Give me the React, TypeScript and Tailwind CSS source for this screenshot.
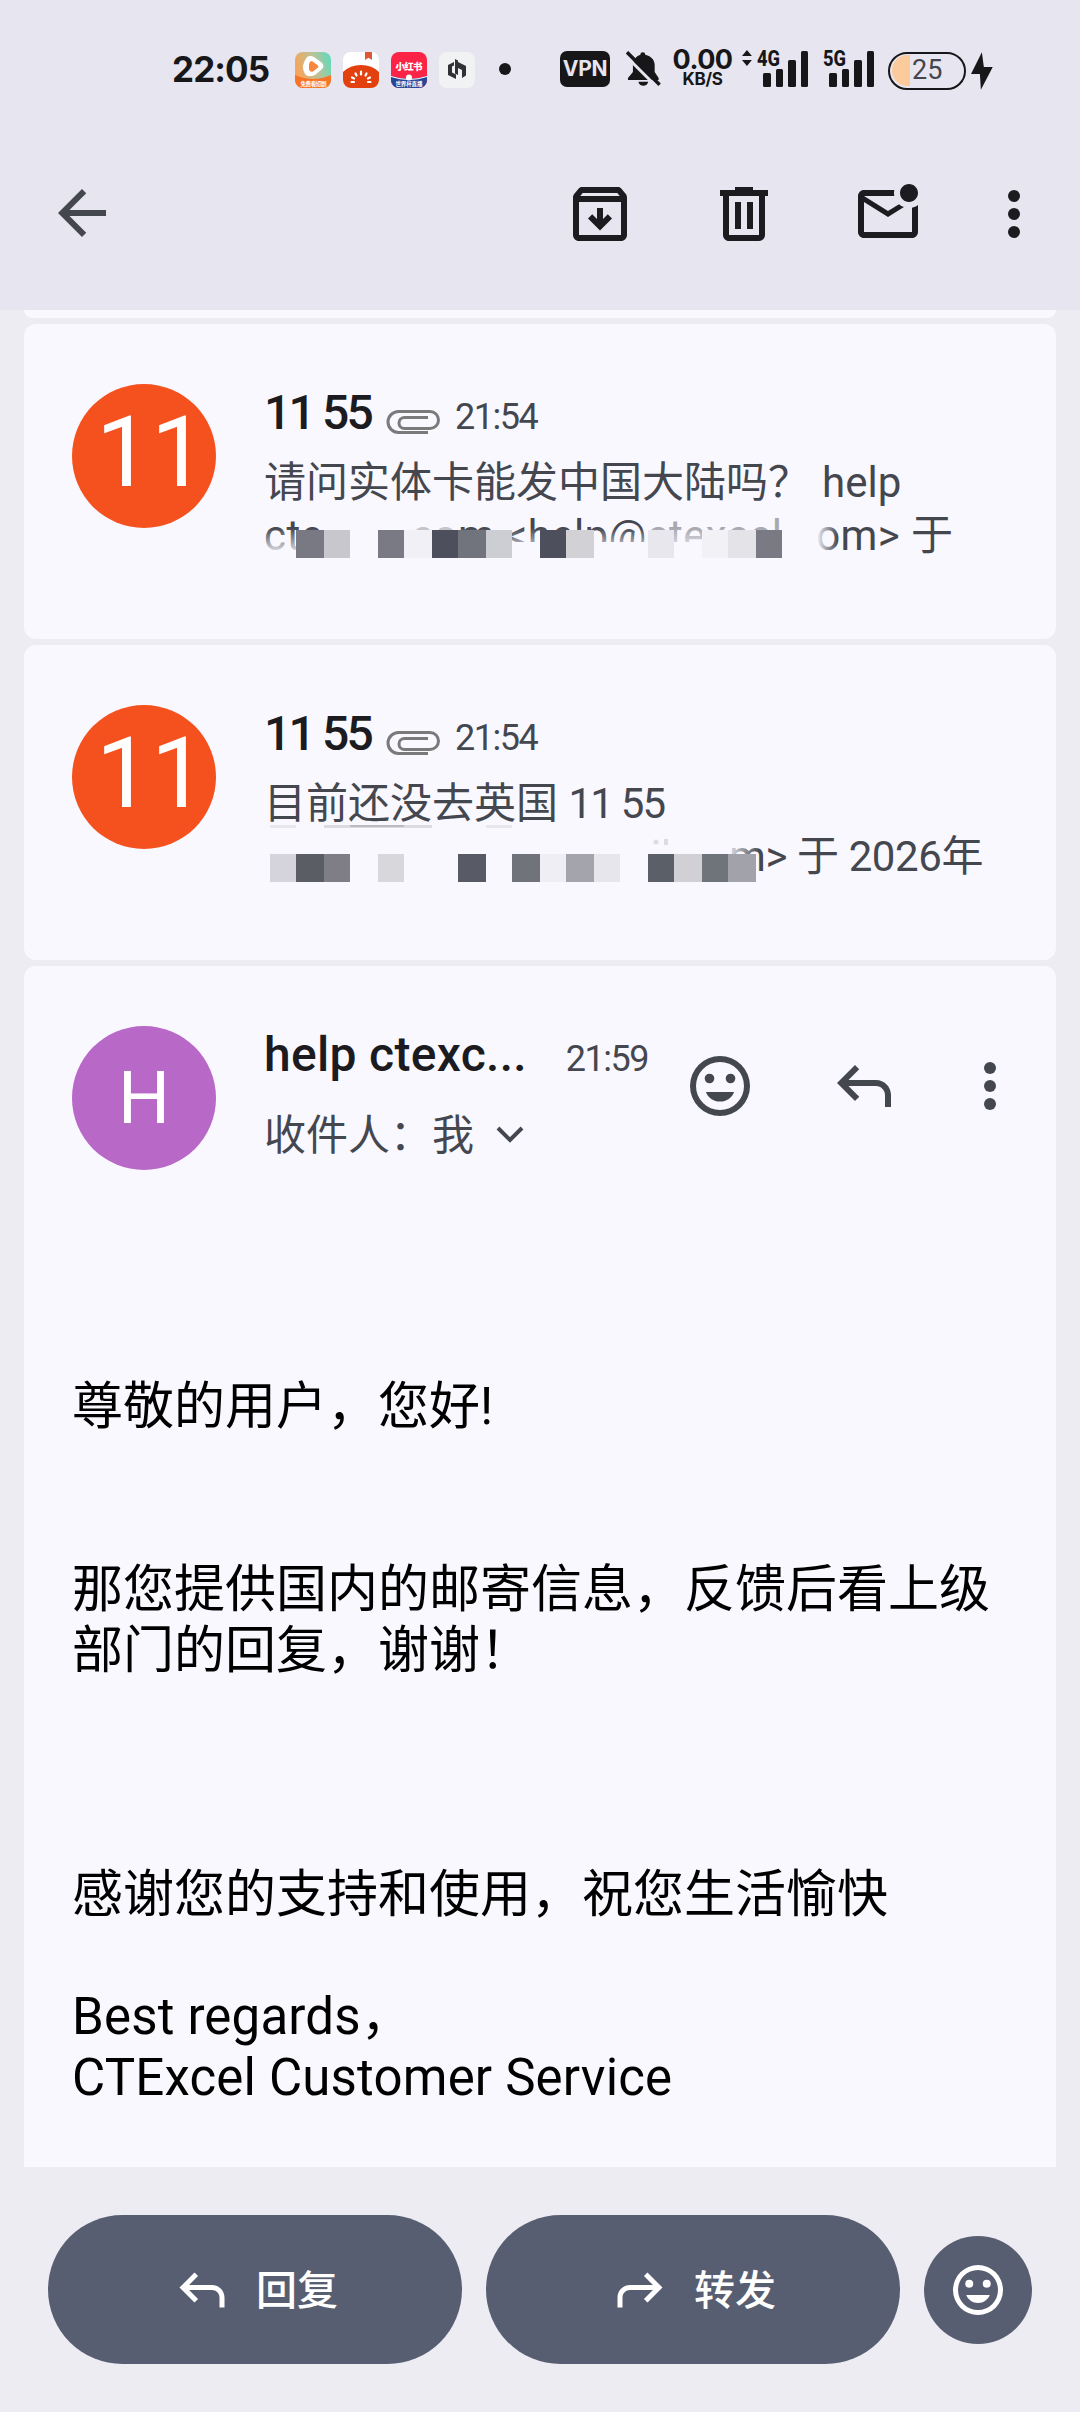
import React from 'react';

const Icon = ({ size = 72, children }: { size?: number; children: React.ReactNode }) => (
  <svg width={size} height={size} viewBox="0 0 24 24" fill="currentColor" className="shrink-0">
    {children}
  </svg>
);

const MoreIcon = () => (
  <Icon>
    <circle cx="12" cy="6" r="2" />
    <circle cx="12" cy="12" r="2" />
    <circle cx="12" cy="18" r="2" />
  </Icon>
);

const ReplyIcon = ({ size = 72 }: { size?: number }) => (
  <Icon size={size}>
    <path d="M19 19v-4c0-1.66-1.34-3-3-3H6.83l3.59 3.59L9 17l-6-6 6-6 1.41 1.41L6.83 10H16c2.76 0 5 2.24 5 5v4h-2z" />
  </Icon>
);

const SmileIcon = ({ size = 72 }: { size?: number }) => (
  <Icon size={size}>
    <path d="M12 2a10 10 0 1 0 0 20 10 10 0 0 0 0-20zm0 18a8 8 0 1 1 0-16 8 8 0 0 1 0 16z" />
    <circle cx="8.5" cy="9.5" r="1.6" />
    <circle cx="15.5" cy="9.5" r="1.6" />
    <path d="M7.3 14c.7 1.9 2.5 3.2 4.7 3.2s4-1.3 4.7-3.2z" />
  </Icon>
);

const ClipIcon = () => (
  <svg width="54" height="24" viewBox="0 0 54 24" fill="none" stroke="#7a7a7a" strokeWidth="3" className="shrink-0">
    <path d="M42 22.5H12.5a10.5 10.5 0 0 1 0-21H44a8.5 8.5 0 0 1 0 17H18.5a5 5 0 0 1 0-11H42" />
  </svg>
);

const Signal = ({ label }: { label: string }) => (
  <svg width="52" height="38" viewBox="0 0 52 38" fill="#17171a" className="shrink-0 overflow-visible">
    <text x="0" y="16" fontFamily="Roboto, sans-serif" fontWeight="800" fontSize="22" textLength="23" lengthAdjust="spacingAndGlyphs">{label}</text>
    <rect x="6" y="23" width="8" height="14" rx="1.5" />
    <rect x="19" y="19" width="7" height="18" rx="1.5" />
    <rect x="31" y="10" width="8" height="27" rx="1.5" />
    <rect x="44" y="1" width="7" height="36" rx="1.5" />
  </svg>
);

const StatusBar = () => (
  <div className="flex h-[138px] items-center pl-[172px] pr-[87px] text-[#17171a]">
    <span className="w-[97px] whitespace-nowrap font-['Inter'] text-[35px] font-bold leading-none tracking-[-0.9px]">22:05</span>
    <div className="ml-[26px] mt-0.5 flex gap-3">
      <svg width="36" height="36" viewBox="0 0 36 36">
        <defs>
          <linearGradient id="video" x1="0" y1="0.3" x2="1" y2="0">
            <stop offset="0" stopColor="#f6a55c" />
            <stop offset="0.55" stopColor="#b5c49a" />
            <stop offset="1" stopColor="#55dcc0" />
          </linearGradient>
          <clipPath id="tile"><rect width="36" height="36" rx="8" /></clipPath>
        </defs>
        <g clipPath="url(#tile)">
          <rect width="36" height="36" fill="url(#video)" />
          <path d="M0 23q18 8 36 0v13H0z" fill="#f97326" />
          <path d="M12 5q3-2 7 0l7 5q5 4 0 8l-6 5q-7 3-10-1-5-8 2-17z" fill="#fff" />
          <path d="M15 9.5q2-1 4 1l4 3q1 1 0 2l-5 4q-3 1-4-2v-5z" fill="#f6873c" />
          <text x="5.5" y="34" fontSize="5.5" fontWeight="700" fill="#fff" fontFamily="Noto Sans CJK SC, sans-serif" textLength="26">免费看短剧</text>
        </g>
      </svg>
      <svg width="36" height="36" viewBox="0 0 36 36">
        <g clipPath="url(#tile)">
          <rect width="36" height="36" fill="#fff" />
          <path d="M22 0h7v8l-3.5-2.2L22 8z" fill="#dc5733" />
          <path d="M0 20q7-7 18-7t18 7v16H0z" fill="#e2400f" />
          <g stroke="#fff" strokeWidth="2.2" strokeLinecap="round">
            <path d="M18 19.5v3M12.5 21.5l1 2M23.5 21.5l-1 2M9 25.5l2 1M27 25.5l-2 1M8.5 30H11M27.5 30H25" />
          </g>
        </g>
      </svg>
      <svg width="36" height="36" viewBox="0 0 36 36">
        <g clipPath="url(#tile)">
          <rect width="36" height="36" fill="#fb2446" />
          <path d="M0 24q18 6 36 0v12H0z" fill="#25479a" />
          <path d="M0 24.5q18 6 36 0" stroke="#fff" strokeWidth="1" fill="none" />
          <circle cx="18" cy="25.5" r="3" fill="#fff" />
          <text x="4.5" y="17.5" fontSize="9.5" fontWeight="900" fill="#fff" fontFamily="Noto Sans CJK SC, sans-serif" textLength="27">小红书</text>
          <text x="4.5" y="34" fontSize="5.5" fontWeight="700" fill="#fff" fontFamily="Noto Sans CJK SC, sans-serif" textLength="27">世界杯直播</text>
        </g>
      </svg>
      <svg width="36" height="36" viewBox="0 0 36 36">
        <rect width="36" height="36" rx="8" fill="#f1f2f3" />
        <path d="M17 27v-4.500l-4-2v-6l2-1V10l-6 3v10z" fill="#2f3135" />
        <path d="M16 7v14.500l3 1.500v-7l4 2v8l4-2.500V14l-8-4V8.500z" fill="#2f3135" />
      </svg>
    </div>
    <span className="ml-6 size-3 rounded-full bg-[#17171a]" />
    <span className="ml-[49px] flex h-9 w-[51px] items-center justify-center rounded-[7px] bg-[#17171a] font-['Inter'] text-[21px] font-bold tracking-[-0.3px] text-[#e7e5ef]">VPN</span>
    <svg width="36" height="36" viewBox="0 0 36 36" className="ml-4">
      <path d="M2 29v-2l5-6v-7c0-5 3-9 7.500-10.500a2.500 2.500 0 0 1 5 0C26 5 29 9 29 14v7l4 6v2z" fill="#17171a" />
      <path d="M12.500 31h10q-1 4-5 4t-5-4z" fill="#17171a" />
      <path d="M-1 4l34 34" stroke="#e7e5ef" strokeWidth="3" />
      <path d="M1 1l33 33" stroke="#17171a" strokeWidth="3.500" />
    </svg>
    <div className="ml-[10px] flex w-[62px] flex-col items-center whitespace-nowrap font-['Inter'] font-bold">
      <span className="text-[27px] leading-[21px] tracking-[-0.5px]">0.00</span>
      <span className="text-[17px] leading-[19px] tracking-[-0.3px]">KB/S</span>
    </div>
    <svg width="10" height="16" viewBox="0 0 10 16" fill="#17171a" className="mb-[22px] ml-[9px]">
      <path d="M5 0l5 6H0zM5 16l5-6H0z" />
    </svg>
    <div className="ml-[5px] flex gap-[14px]">
      <Signal label="4G" />
      <Signal label="5G" />
    </div>
    <div className="relative ml-[13px] mt-[3px] flex h-[38px] w-[79px] items-center justify-center overflow-hidden rounded-full border-2 border-[#17171a]">
      <span className="absolute left-0.5 top-[1.5px] h-[31px] w-[18px] rounded-l-full bg-[#fbcb9c]" />
      <span className="relative font-['Roboto'] text-[27px] leading-none text-[#45464c]">25</span>
    </div>
    <svg width="22" height="38" viewBox="0 0 22 38" className="ml-[5px] mt-[3px]">
      <path d="M11 0L0 22h9l1 16 12-23h-9z" fill="#17171a" />
    </svg>
  </div>
);

const Toolbar = () => (
  <div className="flex h-[152px] items-center pl-[46px] pr-[30px] text-[#1b1b20]">
    <span className="mb-0.5 text-[#45474f]">
      <Icon><path d="M20 11H7.830l5.590-5.590L12 4l-8 8 8 8 1.410-1.410L7.830 13H20v-2z" /></Icon>
    </span>
    <div className="ml-auto flex gap-[72px]">
      <Icon><path d="M20.540 5.230l-1.390-1.680C18.880 3.210 18.470 3 18 3H6c-.47 0-.88.21-1.160.55L3.460 5.230C3.170 5.570 3 6.020 3 6.500V19c0 1.100.9 2 2 2h14c1.100 0 2-.9 2-2V6.500c0-.48-.17-.93-.46-1.270zM6.240 5h11.520l.83 1H5.420l.82-1zM5 19V8h14v11H5zm8-9h-2v3.700l-1.600-1.600L8 13.500l4 4 4-4-1.400-1.400-1.600 1.600z" /></Icon>
      <Icon><path d="M15 4V3H9v1H4v2h1v13c0 1.100.9 2 2 2h10c1.100 0 2-.9 2-2V6h1V4h-5zm2 15H7V6h10v13zM9 8h2v9H9zm4 0h2v9h-2z" /></Icon>
      <Icon><path d="M22 8.980V18c0 1.100-.9 2-2 2H4c-1.100 0-2-.9-2-2V6c0-1.100.9-2 2-2h10.100C14.040 4.320 14 4.660 14 5s.04.68.1 1H4l8 5 3.670-2.290c.47.43 1.020.76 1.630.98L12 13 4 8v10h16V9.900c.74-.15 1.420-.48 2-.92zM16 5c0 1.660 1.340 3 3 3s3-1.340 3-3-1.340-3-3-3-3 1.340-3 3z" /></Icon>
    </div>
    <span className="ml-[54px]"><MoreIcon /></span>
  </div>
);

type Block = [x: number, w: number, color: string];

const firstBlocks: Block[] = [
  [32, 28, '#787982'], [60, 26, '#c8c7ce'], [114, 26, '#797a83'], [140, 28, '#f1f0f7'],
  [168, 26, '#4d505c'], [194, 28, '#71747c'], [222, 26, '#cdced3'], [276, 26, '#4d505c'],
  [302, 28, '#d2d1d6'], [384, 26, '#e8e7ed'], [438, 26, '#f2f1f6'], [464, 28, '#e4e3e8'],
  [492, 26, '#797a83'],
];

const secondBlocks: Block[] = [
  [6, 26, '#d5d3db'], [32, 28, '#5b5d65'], [60, 26, '#7f7e87'], [114, 26, '#d8d7dc'],
  [194, 28, '#585a65'], [248, 28, '#70747a'], [276, 26, '#efeef4'], [302, 28, '#a4a4ad'],
  [330, 26, '#e7e6eb'], [384, 26, '#5b5f68'], [410, 28, '#d0d0d5'], [438, 26, '#6f747a'],
  [464, 28, '#a2a2aa'],
];

const Mosaic = ({ blocks, className }: { blocks: Block[]; className: string }) => (
  <svg width="560" height="28" className={className}>
    {blocks.map(([x, w, color]) => (
      <rect key={x} x={x} width={w} height="28" fill={color} />
    ))}
  </svg>
);

const Message = ({ children }: { children: React.ReactNode }) => (
  <div className="flex h-[315px] rounded-xl bg-[#f9f8ff] px-12 pt-[60px]">
    <div className="flex size-36 shrink-0 items-center justify-center rounded-full bg-[#f5511e] pb-1.5 pl-3.5 font-['Roboto'] text-[98px] leading-none text-white">
      <span>11</span>
    </div>
    <div className="ml-12 min-w-0 flex-1">
      <div className="flex h-[60px] items-center whitespace-nowrap font-['Roboto']">
        <span className="mb-0.5 w-[105px] text-[48px] font-medium tracking-[-2.8px] text-[#1b1b20]">11 55</span>
        <span className="ml-[17px] mt-[16px]"><ClipIcon /></span>
        <span className="ml-[15px] mt-1.5 text-[36px] tracking-[-1.5px] text-[#45474f]">21:54</span>
      </div>
      <div className="relative mt-3 whitespace-nowrap font-['Roboto','Noto_Sans_CJK_SC',sans-serif] text-[42px] leading-[53px] text-[#45474f]">
        {children}
      </div>
    </div>
  </div>
);

const App = () => {
  return (
    <div className="flex h-[2412px] w-[1080px] flex-col overflow-hidden bg-[#edecf2]">
      <header className="h-[310px] shrink-0 bg-[#e7e5ef]">
        <StatusBar />
        <Toolbar />
      </header>

      <main className="flex flex-col gap-1.5 px-6">
        <div className="h-2 rounded-b-xl bg-[#f9f8ff]" />

        <Message>
          <p>请问实体卡能发中国大陆吗？<span className="ml-3">help</span></p>
          <p className="tracking-[0.4px]">ctexcel.com &lt;help@ctexcel.com&gt; 于</p>
          {/* redaction smear over the address */}
          <div className="absolute left-0 top-[72px] h-7 w-[545px] bg-gradient-to-b from-[#f9f8ff]/0 to-[#f9f8ff]" />
          <div className="absolute left-[60px] top-[56px] h-12 w-[84px] bg-[#f9f8ff]" />
          <div className="absolute left-[140px] top-[56px] h-12 w-[50px] bg-[#f9f8ff]/70" />
          <div className="absolute left-[385px] top-[56px] h-12 w-[140px] bg-[#f9f8ff]/55" />
          <div className="absolute left-[518px] top-[56px] h-12 w-[56px] bg-gradient-to-r from-[#f9f8ff] via-[#f9f8ff] via-60% to-[#f9f8ff]/0" />
          <div className="absolute left-60 top-[86px] h-8 w-[290px] bg-[#f9f8ff]" />
          <Mosaic blocks={firstBlocks} className="absolute left-0 top-[74px]" />
        </Message>

        <Message>
          <p>目前还没去英国 <span className="tracking-[-1.8px]">11 55</span></p>
          <p className="pl-[465px] tracking-[-0.4px]">m&gt; 于 2026年</p>
          <div className="absolute left-[460px] top-[56px] h-[46px] w-9 bg-gradient-to-r from-[#f9f8ff] to-[#f9f8ff]/0" />
          <Mosaic blocks={secondBlocks} className="absolute left-0 top-[77px]" />
          <svg width="500" height="24" className="absolute left-0 top-[48px]">
            <rect x="6" width="26" height="3" fill="#e8e7ec" />
            <rect x="60" width="108" height="3" fill="#dcdbe1" />
            <rect x="86" y="-1" width="54" height="3" fill="#bcbbc2" />
            <rect x="222" width="26" height="3" fill="#e8e7ec" />
            <circle cx="392" cy="17" r="2.5" fill="#dddce2" />
            <rect x="400" y="14" width="4" height="6" fill="#dddce2" />
          </svg>
        </Message>

        <article className="h-[1201px] rounded-t-xl bg-[#f9f8ff] px-12 pt-[60px]">
          <div className="flex h-36 text-[#45474f]">
            <div className="flex size-36 shrink-0 items-center justify-center rounded-full bg-[#b868c7] font-['Roboto'] text-[73px] leading-none text-white">H</div>
            <div className="ml-12 w-[384px] whitespace-nowrap">
              <div className="flex h-[60px] items-center font-['Roboto']">
                <span className="mb-0.5 w-[302px] text-[48px] font-medium tracking-[0.3px] text-[#1b1b20]">help ctexc...</span>
                <span className="mt-1.5 text-[36px] tracking-[-1.5px]">21:59</span>
              </div>
              <div className="flex h-[98px] items-center font-['Roboto','Noto_Sans_CJK_SC',sans-serif] text-[42px]">
                <span>收件人：我</span>
                <svg width="28" height="18" viewBox="0 0 28 18" fill="none" stroke="currentColor" strokeWidth="4" className="ml-[22px]">
                  <path d="M2 2l12 12L26 2" />
                </svg>
              </div>
            </div>
            <div className="ml-auto mr-[-18px] flex h-[120px] items-center">
              <SmileIcon />
              <span className="ml-[72px]"><ReplyIcon /></span>
              <span className="ml-[54px]"><MoreIcon /></span>
            </div>
          </div>

          <div className="mt-[206px] whitespace-nowrap font-['Roboto','Noto_Sans_CJK_SC',sans-serif] text-[51px] leading-[61px] text-black">
            <p>尊敬的用户，您好!</p>
            <p className="mt-[122px]">那您提供国内的邮寄信息，反馈后看上级<br />部门的回复，谢谢！</p>
            <p className="mt-[183px]">感谢您的支持和使用，祝您生活愉快</p>
            <p className="mt-[61px] tracking-[0.18px]">Best regards，<br />CTExcel Customer Service</p>
          </div>
        </article>
      </main>

      <footer className="flex flex-1 items-center gap-6 px-12 font-['Noto_Sans_CJK_SC',sans-serif] text-[41px] font-medium text-white">
        <button className="flex h-[149px] w-[414px] items-center justify-center gap-6 rounded-[75px] bg-[#585e71]">
          <ReplyIcon size={60} />
          <span className="mb-1">回复</span>
        </button>
        <button className="flex h-[149px] w-[414px] items-center justify-center gap-6 rounded-[75px] bg-[#585e71]">
          <span className="-scale-x-100"><ReplyIcon size={60} /></span>
          <span className="mb-1">转发</span>
        </button>
        <button className="flex size-[108px] items-center justify-center rounded-full bg-[#585e71]">
          <SmileIcon size={60} />
        </button>
      </footer>
    </div>
  );
};

export default App;
